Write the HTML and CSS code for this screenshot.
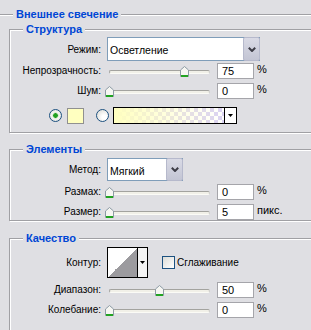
FILE: index.html
```html
<!DOCTYPE html>
<html>
<head>
    <title>Внешнее свечение</title>
    <link rel="stylesheet" href="styles.css">
</head>
<body>
    <svg class="defs" width="0" height="0">
        <symbol id="thumb" viewBox="0 0 9 11">
            <path d="M0.5 4 L4.5 0.5 L8.5 4 V10.5 H0.5 Z" fill="#f6f6f2" stroke="#8c9ba4"/>
            <path d="M1 9.5 H8 M1 10.5 H8" stroke="#22a322"/>
        </symbol>
        <symbol id="chevron" viewBox="0 0 8 5">
            <polyline points="0.8,0.8 4,4 7.2,0.8" fill="none" stroke="#3c3c46" stroke-width="2"/>
        </symbol>
        <symbol id="arrow" viewBox="0 0 5 3">
            <polygon points="0,0 5,0 2.5,3" fill="#000"/>
        </symbol>
    </svg>

    <fieldset class="group outer">
        <legend>Внешнее свечение</legend>

        <fieldset class="group first">
            <legend>Структура</legend>
            <div class="row select-row">
                <span class="label">Режим:</span>
                <div class="select wide">
                    <span class="select-text">Осветление</span>
                    <span class="select-btn"><svg width="8" height="5"><use href="#chevron"/></svg></span>
                </div>
            </div>
            <div class="row slider-row r1">
                <span class="label">Непрозрачность:</span>
                <div class="slider"><div class="track"></div><svg class="thumb" style="left:71px" width="9" height="11"><use href="#thumb"/></svg></div>
                <span class="num">75</span><span class="unit">%</span>
            </div>
            <div class="row slider-row">
                <span class="label">Шум:</span>
                <div class="slider"><div class="track"></div><svg class="thumb" style="left:-4px" width="9" height="11"><use href="#thumb"/></svg></div>
                <span class="num">0</span><span class="unit">%</span>
            </div>
            <div class="row color-row">
                <span class="radio checked"></span>
                <span class="swatch"></span>
                <span class="radio second"></span>
                <div class="gradient">
                    <span class="gradient-fill"></span>
                    <span class="gradient-btn"><svg width="5" height="3"><use href="#arrow"/></svg></span>
                </div>
            </div>
        </fieldset>

        <fieldset class="group">
            <legend>Элементы</legend>
            <div class="row select-row small">
                <span class="label">Метод:</span>
                <div class="select narrow">
                    <span class="select-text">Мягкий</span>
                    <span class="select-btn"><svg width="8" height="5"><use href="#chevron"/></svg></span>
                </div>
            </div>
            <div class="row slider-row r3">
                <span class="label">Размах:</span>
                <div class="slider"><div class="track"></div><svg class="thumb" style="left:-4px" width="9" height="11"><use href="#thumb"/></svg></div>
                <span class="num">0</span><span class="unit">%</span>
            </div>
            <div class="row slider-row">
                <span class="label">Размер:</span>
                <div class="slider"><div class="track"></div><svg class="thumb" style="left:-4px" width="9" height="11"><use href="#thumb"/></svg></div>
                <span class="num">5</span><span class="unit">пикс.</span>
            </div>
        </fieldset>

        <fieldset class="group last">
            <legend>Качество</legend>
            <div class="row contour-row">
                <span class="label">Контур:</span>
                <div class="contour">
                    <span class="contour-preview"></span>
                    <span class="contour-btn"><svg width="5" height="3"><use href="#arrow"/></svg></span>
                </div>
                <span class="checkbox"></span>
                <span class="check-label">Сглаживание</span>
            </div>
            <div class="row slider-row">
                <span class="label">Диапазон:</span>
                <div class="slider"><div class="track"></div><svg class="thumb" style="left:46px" width="9" height="11"><use href="#thumb"/></svg></div>
                <span class="num">50</span><span class="unit">%</span>
            </div>
            <div class="row slider-row">
                <span class="label">Колебание:</span>
                <div class="slider"><div class="track"></div><svg class="thumb" style="left:-4px" width="9" height="11"><use href="#thumb"/></svg></div>
                <span class="num">0</span><span class="unit">%</span>
            </div>
        </fieldset>
    </fieldset>
</body>
</html>
```

FILE: styles.css
```css
body {
    margin: 0;
    overflow: hidden;
    background: #dfdfe3;
    font-family: "Liberation Sans", Arial, sans-serif;
    font-size: 10px;
    color: #000;
}
.defs {
    position: absolute;
}

/* group boxes */
.group {
    margin: 10px 0 0 10px;
    padding: 0 0 0 0;
    border: 1px solid #a0a0a4;
    box-shadow: inset 1px 1px 0 #fff, 1px 1px 0 #fff;
    min-inline-size: 0;
}
.group legend {
    margin-left: 13px;
    padding: 0 3px;
    font-size: 11px;
    line-height: 13px;
    font-weight: bold;
    color: #0046d5;
    background: #dfdfe3;
}
.outer {
    margin: 8px 0 0 -2px;
    width: 360px;
    padding-bottom: 40px;
}
.outer > legend {
    margin-left: 14px;
}
.group.first {
    margin-top: 2px;
    padding-bottom: 8px;
}
.group.last {
    margin-top: 11px;
    padding-bottom: 20px;
}

/* rows */
.row {
    display: flex;
    align-items: center;
}
.label {
    width: 91px;
    margin-right: 6px;
    text-align: right;
    white-space: nowrap;
}
.select-row {
    margin-top: 1px;
}
.select-row.small {
    margin-top: 2px;
}
.slider-row {
    height: 16px;
    margin-top: 4px;
    align-items: flex-start;
}
.slider-row .label {
    line-height: 16px;
}
.slider-row.r1 {
    margin-top: 2px;
}
.slider-row.r3 {
    margin-top: 3px;
}

/* select */
.select {
    display: flex;
    box-sizing: border-box;
    height: 24px;
    border: 1px solid #7f9db9;
    background: #fff;
}
.select.wide {
    width: 153px;
}
.select.narrow {
    width: 76px;
    height: 23px;
}
.select-text {
    flex: 1;
    padding: 6px 0 0 2px;
    font-size: 10.5px;
}
.select-btn {
    display: flex;
    align-items: center;
    justify-content: center;
    box-sizing: border-box;
    width: 17px;
    margin: -1px -1px -1px 0;
    border: 1px solid #b6b9cc;
    border-radius: 2px;
    background: linear-gradient(#d9dae5, #c3c5d4);
}

/* slider */
.slider {
    position: relative;
    width: 101px;
    height: 16px;
    margin-left: 2px;
    padding-top: 7px;
    box-sizing: border-box;
}
.track {
    height: 2px;
    border: 1px solid #a3a39f;
    border-bottom-color: #fbfbf6;
    border-right-color: #d0d0cc;
    border-radius: 2px;
    background: #f1f0e8;
}
.thumb {
    position: absolute;
    top: 3px;
}
.num {
    box-sizing: border-box;
    width: 37px;
    height: 16px;
    margin-left: 7px;
    padding-left: 4px;
    font-size: 11px;
    line-height: 14px;
    border: 1px solid #a5a5aa;
    background: #fff;
}
.unit {
    margin-left: 3px;
    font-size: 11px;
    line-height: 12px;
}

/* colour row */
.color-row {
    height: 17px;
    margin-top: 8px;
}
.radio {
    box-sizing: border-box;
    width: 13px;
    height: 13px;
    border: 1px solid #1c5180;
    border-radius: 50%;
    background: radial-gradient(circle at 65% 65%, #fff 20%, #d6d6d0 100%);
}
.radio.checked {
    margin-left: 39px;
    background: radial-gradient(circle, #21a121 0 2px, #b9e0b4 2.5px, #f6f6f3 3.5px, #d6d6d0 100%);
}
.radio.second {
    margin-left: 12px;
}
.swatch {
    box-sizing: border-box;
    width: 17px;
    height: 16px;
    margin-left: 5px;
    border: 1px solid #909090;
    background: #ffffc0;
}
.gradient {
    display: flex;
    box-sizing: border-box;
    width: 124px;
    height: 17px;
    margin-left: 4px;
    border: 1px solid #000;
}
.gradient-fill {
    flex: 1;
    border-right: 1px solid #000;
    background:
        linear-gradient(to right, #ffffc0, rgba(255, 255, 192, 0)),
        repeating-conic-gradient(#fff 0 25%, #dad2f3 0 50%) 0 0 / 8px 8px;
}
.gradient-btn {
    display: flex;
    align-items: center;
    justify-content: center;
    width: 11px;
    background: #fff;
}

/* contour row */
.contour-row {
    margin-top: 2px;
}
.contour {
    display: flex;
    box-sizing: border-box;
    width: 41px;
    height: 31px;
    border: 1px solid #000;
}
.contour-preview {
    width: 29px;
    border-right: 1px solid #000;
    background: linear-gradient(to top left, #9c9b9f 50%, #fff 50%);
}
.contour-btn {
    display: flex;
    align-items: center;
    justify-content: center;
    flex: 1;
    background: #f4f4f4;
}
.checkbox {
    box-sizing: border-box;
    width: 13px;
    height: 13px;
    margin-left: 14px;
    border: 1px solid #1c5180;
    background: linear-gradient(135deg, #dcdcd7, #fff);
}
.check-label {
    margin-left: 2px;
}
```
